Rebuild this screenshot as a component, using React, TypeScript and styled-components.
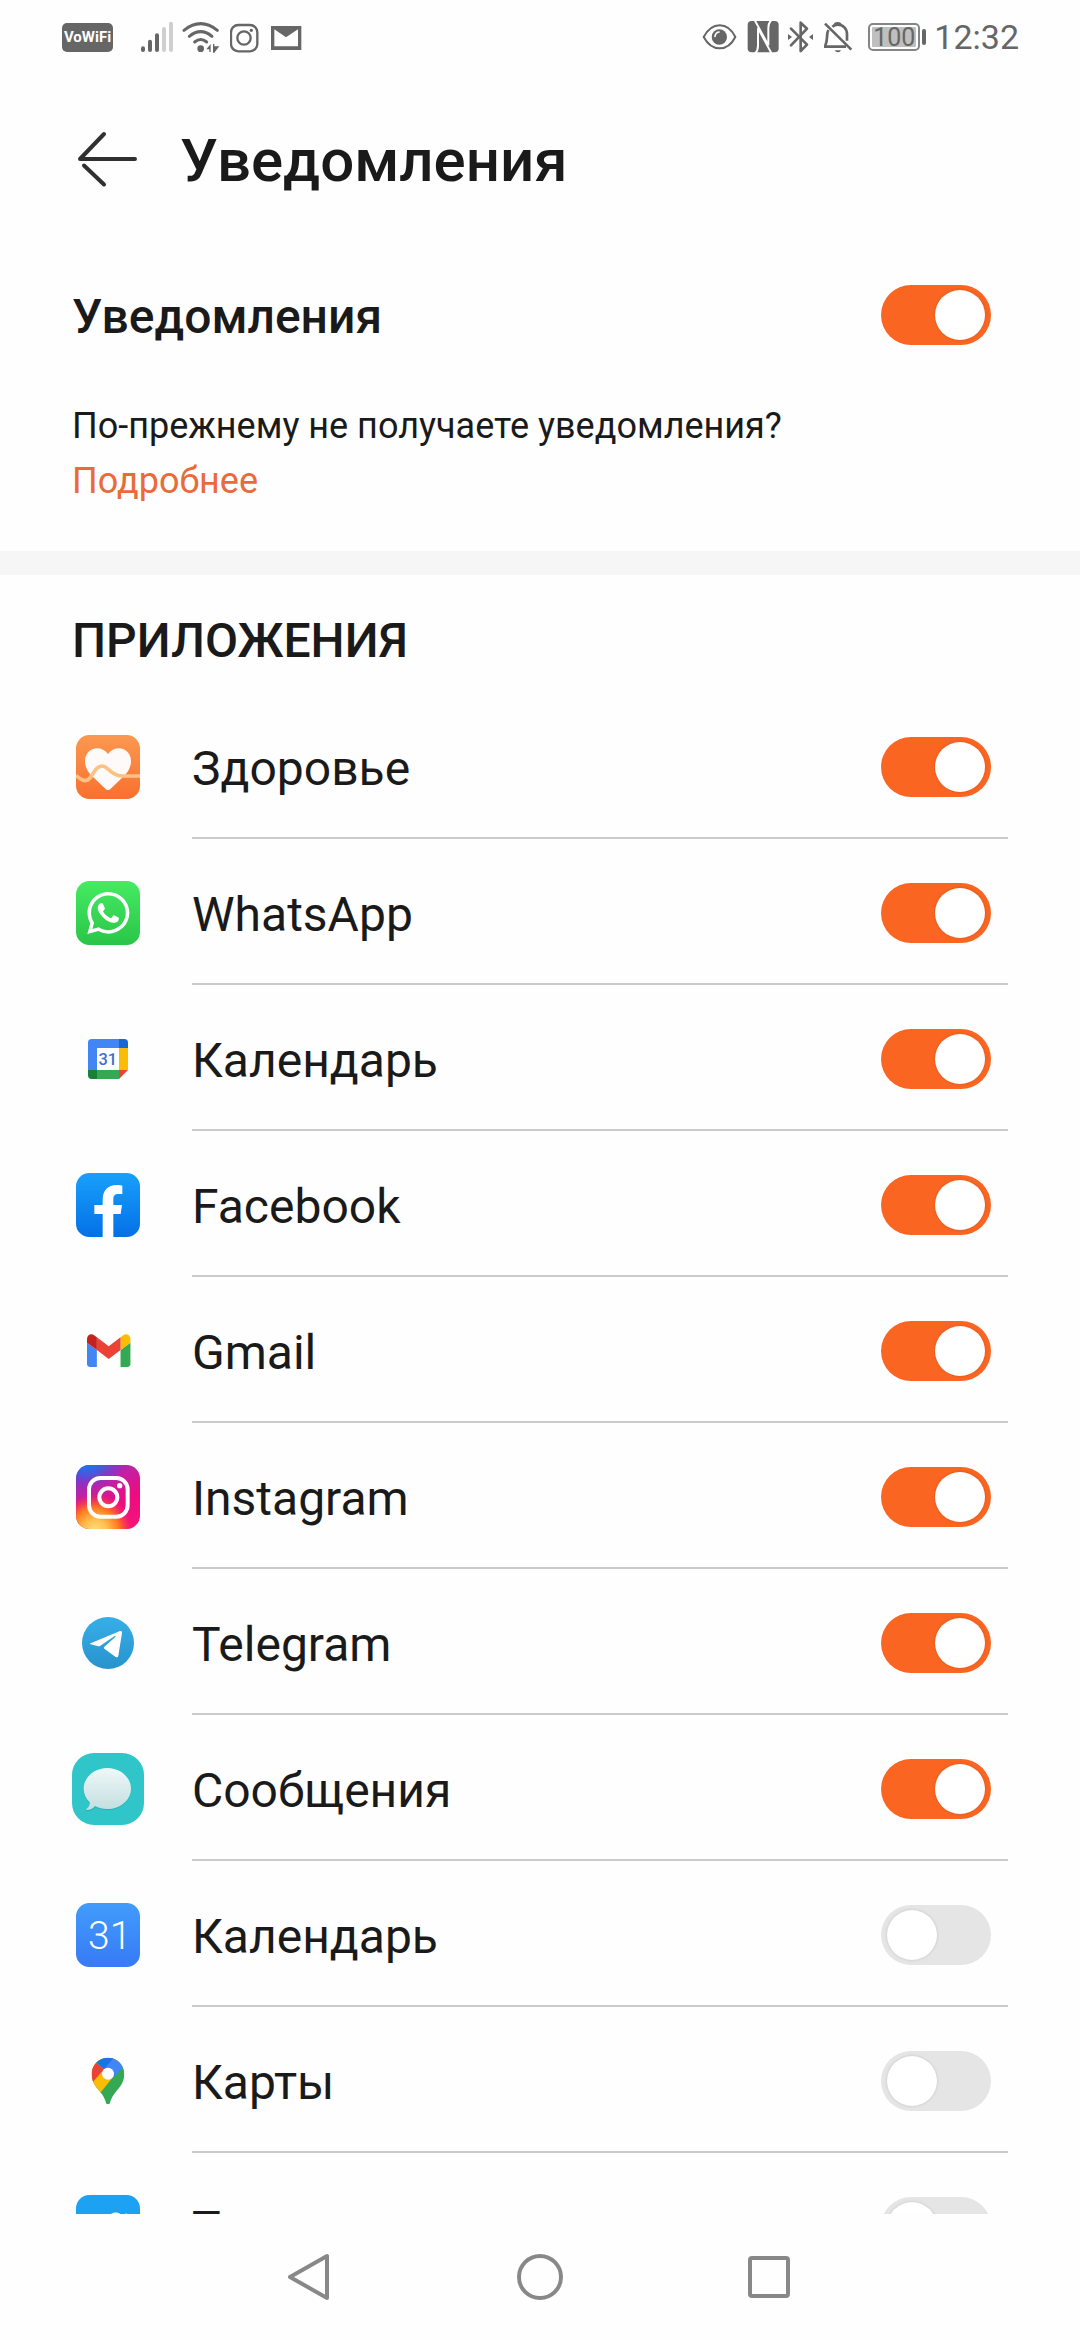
import React, { useState } from "react";
import styled, { createGlobalStyle } from "styled-components";
import { FaTwitter, FaWhatsapp } from "react-icons/fa";

const ink = "#1a1a1a";
const statusInk = "#666666";
const accent = "#fb6522";

const GlobalStyle = createGlobalStyle`
  *, *::before, *::after { box-sizing: border-box; }
  body { margin: 0; background: #fefefe; }
`;

const Screen = styled.div`
  display: flex;
  flex-direction: column;
  height: 100vh;
  overflow: hidden;
  background: #fefefe;
  color: ${ink};
  font-family: Roboto, "Noto Sans", sans-serif;
`;

/* ---------- status bar ---------- */

const StatusBar = styled.div`
  flex: none;
  display: flex;
  align-items: center;
  justify-content: space-between;
  height: 74px;
  padding: 0 61px 0 62px;
  color: ${statusInk};
`;

const StatusGroup = styled.div`
  display: flex;
  align-items: center;
  gap: 8px;
`;

const CallBadge = styled.span`
  width: 51px;
  height: 29px;
  margin-right: 20px;
  border-radius: 5px;
  background: ${statusInk};
  color: #fff;
  font-size: 15px;
  font-weight: 700;
  line-height: 29px;
  text-align: center;
`;

const StatusSvg = styled.svg`
  flex: none;
  display: block;
  height: 34px;
`;

const Battery = styled.span`
  display: flex;
  align-items: center;
  gap: 2px;
`;

const BatteryCell = styled.span`
  width: 52px;
  height: 28px;
  padding: 2px;
  border: 2px solid #858585;
  border-radius: 5px;
  background: #bfbfbf content-box;
  font-size: 25px;
  line-height: 22px;
  display: flex;
  justify-content: center;
`;

const BatteryTip = styled.span`
  width: 4px;
  height: 16px;
  border-radius: 2px;
  background: ${statusInk};
`;

const Clock = styled.time`
  font-size: 34px;
  line-height: 40px;
`;

/* ---------- page ---------- */

const TitleBar = styled.header`
  flex: none;
  display: flex;
  align-items: center;
  gap: 40px;
  height: 174px;
  padding: 0 72px;
`;

const BackButton = styled.button`
  display: block;
  width: 68px;
  height: 68px;
  padding: 0;
  border: 0;
  background: none;
`;

const Title = styled.h1`
  margin: 0;
  font-size: 60px;
  font-weight: 500;
  line-height: 72px;
`;

const Content = styled.main`
  flex: 1;
  min-height: 0;
  overflow: auto;
  scrollbar-width: none;
`;

const MasterRow = styled.div`
  display: flex;
  align-items: center;
  justify-content: space-between;
  height: 134px;
  padding: 0 89px 0 72px;
`;

const MasterLabel = styled.label`
  padding-top: 3px;
  font-size: 48px;
  font-weight: 500;
  line-height: 56px;
`;

const Help = styled.p`
  margin: 0;
  padding: 17px 72px 42px;
  border-bottom: 24px solid #f6f6f6;
  font-size: 36px;
  line-height: 55px;
`;

const HelpLink = styled.a`
  display: block;
  color: #e96b39;
  text-decoration: none;
`;

const SectionTitle = styled.h2`
  margin: 0;
  padding: 38px 72px 24px;
  font-size: 48px;
  font-weight: 500;
  line-height: 56px;
`;

const AppList = styled.ul`
  margin: 0;
  padding: 0;
  list-style: none;
`;

const AppItem = styled.li`
  display: flex;
  align-items: center;
  gap: 48px;
  height: 146px;
  padding: 2px 72px 0;
`;

const AppIcon = styled.svg`
  flex: none;
  display: block;
  width: 72px;
  height: 72px;
`;

const AppBody = styled.div`
  flex: 1;
  align-self: stretch;
  display: flex;
  align-items: center;
  justify-content: space-between;
  padding: 2px 17px 0 0;
  border-bottom: 2px solid #cbcbcb;
`;

const AppName = styled.label`
  padding-top: 3px;
  font-size: 48px;
  line-height: 56px;
`;

const Switch = styled.input`
  appearance: none;
  flex: none;
  width: 110px;
  height: 60px;
  margin: 0;
  padding: 5px 6px;
  border-radius: 30px;
  background: #e5e5e5;
  display: flex;

  &::before {
    content: "";
    width: 50px;
    height: 50px;
    border-radius: 50%;
    background: #fff;
    box-shadow: 0 0 3px rgba(0, 0, 0, 0.16);
  }

  &:checked {
    justify-content: flex-end;
    background: ${accent};
  }
`;

const NavBar = styled.nav`
  flex: none;
  display: flex;
  justify-content: center;
  height: 126px;
`;

const NavButton = styled.button`
  width: 230px;
  padding: 0;
  border: 0;
  background: none;
  display: flex;
  align-items: center;
  justify-content: center;
`;

/* ---------- app icons ---------- */

const HealthIcon = () => (
  <AppIcon viewBox="36 33 216 216" aria-hidden="true">
    <defs>
      <linearGradient id="health-bg" x1="0" y1="0" x2="0" y2="1">
        <stop offset="0" stopColor="#fc9850" />
        <stop offset="1" stopColor="#f8702e" />
      </linearGradient>
    </defs>
    <rect x="48" y="45" width="192" height="192" rx="40" fill="url(#health-bg)" />
    <path
      d="M144 102c-8-11-20-17-33-17-20 0-36 17-36 38 0 22 13 38 25 49l36 34c5 5 11 5 16 0l36-34c12-11 25-27 25-49 0-21-16-38-36-38-13 0-25 6-33 17z"
      fill="#fffafa"
    />
    <path
      d="M48 168c10 3 14 14 28 14 22 0 24-44 50-44 19 0 26 30 60 30h54"
      fill="none"
      stroke="#fcc283"
      strokeWidth="11"
    />
  </AppIcon>
);

const WhatsAppIcon = () => (
  <AppIcon viewBox="36 471 216 216" aria-hidden="true">
    <defs>
      <linearGradient id="whatsapp-bg" x1="0" y1="0" x2="0" y2="1">
        <stop offset="0" stopColor="#45eb62" />
        <stop offset="1" stopColor="#2ac548" />
      </linearGradient>
    </defs>
    <rect x="48" y="483" width="192" height="192" rx="40" fill="url(#whatsapp-bg)" />
    <FaWhatsapp x="73" y="507" size="144" color="#fff" />
  </AppIcon>
);

const GoogleCalendarIcon = () => (
  <AppIcon viewBox="36 39 216 216" aria-hidden="true">
    <path d="M84 180V98q0-11 11-11h82v27h-66v66z" fill="#4285f4" />
    <path d="M177 87h16q11 0 11 11v16h-27z" fill="#1967d2" />
    <path d="M177 114h27v66h-27z" fill="#fbbc04" />
    <path d="M111 180h66v27h-66z" fill="#34a853" />
    <path d="M84 180h27v27H95q-11 0-11-11z" fill="#188038" />
    <path d="M177 180h27l-27 27z" fill="#ea4335" />
    <path d="M111 114h66v66h-66z" fill="#fff" />
    <text x="143" y="165" fontSize="49" fontWeight="500" textAnchor="middle" fill="#3c6fd0">31</text>
  </AppIcon>
);

const FacebookIcon = () => (
  <AppIcon viewBox="36 477 216 216" aria-hidden="true">
    <defs>
      <linearGradient id="facebook-bg" x1="0" y1="0" x2="0" y2="1">
        <stop offset="0" stopColor="#18a0fb" />
        <stop offset="1" stopColor="#0470e6" />
      </linearGradient>
    </defs>
    <rect x="48" y="489" width="192" height="192" rx="40" fill="url(#facebook-bg)" />
    <path
      d="M128 682v-70h-25v-27h25v-14c0-31 16-46 42-46 8 0 14 1 17 2v25h-12c-11 0-15 6-15 15v18h26l-4 27h-22v70z"
      fill="#fff"
    />
  </AppIcon>
);

const GmailIcon = () => (
  <AppIcon viewBox="36 45 216 216" aria-hidden="true">
    <g transform="translate(81 103) scale(1.48) translate(-52 -42)">
      <path fill="#4285f4" d="M58 108h14V74L52 59v43c0 3.32 2.69 6 6 6" />
      <path fill="#34a853" d="M120 108h14c3.32 0 6-2.69 6-6V59l-20 15" />
      <path fill="#fbbc04" d="M120 48v26l20-15v-8c0-7.42-8.47-11.65-14.4-7.2" />
      <path fill="#ea4335" d="M72 74V48l24 18 24-18v26L96 92" />
      <path fill="#c5221f" d="M52 51v8l20 15V48l-5.6-4.2c-5.94-4.45-14.4-.22-14.4 7.2" />
    </g>
  </AppIcon>
);

const InstagramIcon = () => (
  <AppIcon viewBox="36 483 216 216" aria-hidden="true">
    <defs>
      <linearGradient id="ig-base" x1="0.1" y1="0" x2="0.7" y2="1">
        <stop offset="0" stopColor="#7a35cf" />
        <stop offset="0.4" stopColor="#c3219f" />
        <stop offset="0.7" stopColor="#ee0a82" />
        <stop offset="1" stopColor="#f4127c" />
      </linearGradient>
      <radialGradient id="ig-blue" cx="0.16" cy="0" r="0.62" gradientTransform="matrix(1 0 0 .6 0 0)">
        <stop offset="0" stopColor="#1b78e8" />
        <stop offset="0.4" stopColor="#3a5fe0" stopOpacity="0.85" />
        <stop offset="1" stopColor="#7a35cf" stopOpacity="0" />
      </radialGradient>
      <radialGradient id="ig-warm" cx="0.3" cy="1.04" r="0.62">
        <stop offset="0" stopColor="#ffe08a" />
        <stop offset="0.3" stopColor="#ffc14e" />
        <stop offset="0.6" stopColor="#ff7a1e" />
        <stop offset="0.8" stopColor="#fb3a4c" stopOpacity="0.7" />
        <stop offset="1" stopColor="#ee0a82" stopOpacity="0" />
      </radialGradient>
    </defs>
    <rect x="48" y="495" width="192" height="192" rx="40" fill="url(#ig-base)" />
    <rect x="48" y="495" width="192" height="192" rx="40" fill="url(#ig-blue)" />
    <rect x="48" y="495" width="192" height="192" rx="40" fill="url(#ig-warm)" />
    <rect x="87" y="534" width="116" height="116" rx="34" fill="none" stroke="#fff" strokeWidth="12" />
    <circle cx="145" cy="592" r="27" fill="none" stroke="#fff" strokeWidth="12" />
    <circle cx="179" cy="557" r="8" fill="#fff" />
  </AppIcon>
);

const TelegramIcon = () => (
  <AppIcon viewBox="36 51 216 216" aria-hidden="true">
    <defs>
      <linearGradient id="telegram-bg" x1="0" y1="0" x2="0" y2="1">
        <stop offset="0" stopColor="#37aee9" />
        <stop offset="1" stopColor="#2893cd" />
      </linearGradient>
    </defs>
    <circle cx="144" cy="159" r="78" fill="url(#telegram-bg)" />
    <path
      d="M92 160l88-37c4-1 7 1 6 6l-11 68c-1 5-4 6-8 4l-33-24c-3-2-3-5-1-7l33-29c2-2 0-4-3-2l-42 28c-3 2-6 2-9 1l-20-5c-3-1-3-2 0-3z"
      fill="#fff"
    />
  </AppIcon>
);

const MessagesIcon = () => (
  <AppIcon viewBox="36 489 216 216" aria-hidden="true">
    <defs>
      <linearGradient id="bubble" x1="0" y1="0" x2="0" y2="1">
        <stop offset="0" stopColor="#eff8f9" />
        <stop offset="1" stopColor="#c3dedf" />
      </linearGradient>
    </defs>
    <rect x="36" y="489" width="216" height="216" rx="66" fill="#2fc5c9" />
    <path
      d="M142 538c39 0 71 27 71 61s-32 61-71 61c-14 0-26-2-36-8-6 8-15 12-25 12-3 0-3-3-1-4 6-4 10-10 9-20-12-11-18-25-18-41 0-34 32-61 71-61z"
      fill="#179fa4"
      opacity="0.45"
    />
    <path
      d="M142 534c39 0 71 28 71 62s-32 61-71 61c-14 0-27-3-37-9-6 8-14 12-24 12-3 0-3-3-1-4 6-4 10-10 9-19-11-11-18-25-18-41 0-34 32-62 71-62z"
      fill="url(#bubble)"
    />
  </AppIcon>
);

const CalendarIcon = () => (
  <AppIcon viewBox="36 57 216 216" aria-hidden="true">
    <defs>
      <linearGradient id="calendar-bg" x1="0" y1="0" x2="0" y2="1">
        <stop offset="0" stopColor="#419cfc" />
        <stop offset="1" stopColor="#377af5" />
      </linearGradient>
    </defs>
    <rect x="48" y="69" width="192" height="192" rx="40" fill="url(#calendar-bg)" />
    <text x="149" y="206" fontSize="117" fontWeight="300" textAnchor="middle" fill="#fff">31</text>
  </AppIcon>
);

const MapsIcon = () => (
  <AppIcon viewBox="36 495 216 216" aria-hidden="true">
    <defs>
      <clipPath id="pin">
        <path d="M144 533c27 0 49 22 49 49 0 30-19 43-31 61-8 12-9 17-12 25-2 6-10 6-12 0-3-8-4-13-12-25-12-18-31-31-31-61 0-27 22-49 49-49z" />
      </clipPath>
    </defs>
    <g clipPath="url(#pin)">
      <path d="M90 530h110v145H90z" fill="#34a853" />
      <path d="M90 530h118l-85 106-33 10z" fill="#fbbc04" />
      <path d="M208 540l-44 50-32-25 34-40z" fill="#4285f4" />
      <path d="M100 541l32 27-38 43-10-20z" fill="#ea4335" />
      <path d="M105 545l27 23 36-43h-50z" fill="#1a73e8" />
    </g>
    <circle cx="144" cy="581" r="18" fill="#fff" />
  </AppIcon>
);

const TwitterIcon = () => (
  <AppIcon viewBox="36 933 216 216" aria-hidden="true">
    <rect x="48" y="945" width="192" height="192" rx="40" fill="#1da1f2" />
    <FaTwitter x="84" y="986" size="120" color="#fff" />
  </AppIcon>
);

type AppEntry = { id: string; name: string; icon: React.FC; on: boolean };

const apps: AppEntry[] = [
  { id: "health", name: "Здоровье", icon: HealthIcon, on: true },
  { id: "whatsapp", name: "WhatsApp", icon: WhatsAppIcon, on: true },
  { id: "gcalendar", name: "Календарь", icon: GoogleCalendarIcon, on: true },
  { id: "facebook", name: "Facebook", icon: FacebookIcon, on: true },
  { id: "gmail", name: "Gmail", icon: GmailIcon, on: true },
  { id: "instagram", name: "Instagram", icon: InstagramIcon, on: true },
  { id: "telegram", name: "Telegram", icon: TelegramIcon, on: true },
  { id: "messages", name: "Сообщения", icon: MessagesIcon, on: true },
  { id: "calendar", name: "Календарь", icon: CalendarIcon, on: false },
  { id: "maps", name: "Карты", icon: MapsIcon, on: false },
  { id: "twitter", name: "Твиттер", icon: TwitterIcon, on: false },
];

const StatusIcons = () => (
  <StatusBar>
    <StatusGroup>
      <CallBadge>VoWiFi</CallBadge>
      <StatusSvg viewBox="303 60 99 102" width="33" aria-hidden="true">
        <g strokeWidth="12" strokeLinecap="round" stroke={statusInk}>
          <path d="M309 145v5M330 125v25M351 106v44" />
          <path d="M372 87v63M393 71v79" stroke="#cfcfcf" />
        </g>
      </StatusSvg>
      <StatusSvg viewBox="426 60 120 102" width="40" aria-hidden="true">
        <g fill="none" stroke={statusInk} strokeWidth="9" strokeLinecap="round">
          <path d="M432 91q50-40 100 0" />
          <path d="M448 109q34-28 68 0" />
          <path d="M464 126q18-15 36 0" />
        </g>
        <circle cx="482" cy="146" r="10" fill={statusInk} />
        <path d="M499 148l13-16v24h-4v-8zM519 132h4v7h15l-15 19h-4z" fill={statusInk} />
      </StatusSvg>
      <StatusSvg viewBox="570 60 96 102" width="32" aria-hidden="true">
        <rect x="573" y="75" width="79" height="79" rx="22" fill="none" stroke={statusInk} strokeWidth="7" />
        <circle cx="612" cy="114" r="20" fill="none" stroke={statusInk} strokeWidth="7" />
        <circle cx="634" cy="91" r="5" fill={statusInk} />
      </StatusSvg>
      <StatusSvg viewBox="690 60 96 102" width="32" aria-hidden="true">
        <path d="M693 78h91v72h-91zM703 88v51h71V88l-36 24z" fill={statusInk} fillRule="evenodd" />
      </StatusSvg>
    </StatusGroup>
    <StatusGroup>
      <StatusSvg viewBox="63 60 108 102" width="36" aria-hidden="true">
        <path
          d="M68 111c12-22 28-35 48-35s36 13 47 35c-11 22-27 34-47 34s-36-12-48-34z"
          fill="none"
          stroke={statusInk}
          strokeWidth="6"
        />
        <circle cx="115" cy="111" r="23" fill={statusInk} />
        <path d="M102 109q1-11 12-13" fill="none" stroke="#fff" strokeWidth="5" strokeLinecap="round" />
      </StatusSvg>
      <StatusSvg viewBox="195 60 102 102" width="34" aria-hidden="true">
        <rect x="200" y="63" width="93" height="94" rx="12" fill={statusInk} />
        <g fill="none" stroke="#fefefe" strokeWidth="6">
          <path d="M221 60l41 76V84q0-15 9-24" />
          <path d="M272 161l-41-76v52q0 15-9 24" />
        </g>
      </StatusSvg>
      <StatusSvg viewBox="321 60 84 102" width="28" aria-hidden="true">
        <path
          d="M330 86l48 48-19 19V68l19 18-48 50"
          fill="none"
          stroke={statusInk}
          strokeWidth="8"
          strokeLinecap="round"
          strokeLinejoin="round"
        />
        <path d="M321 102l12 9-12 9zM396 102v18l-12-9z" fill={statusInk} />
      </StatusSvg>
      <StatusSvg viewBox="429 60 108 102" width="36" aria-hidden="true">
        <g fill="none" stroke={statusInk} strokeWidth="8">
          <path d="M432 71l79 78" />
          <path d="M442 90c-4 8-4 14-4 22 0 12-2 18-6 28h63" />
          <path d="M454 80c6-5 10-6 16-6 16 0 28 12 28 28v20" />
          <path d="M462 76c0-8 16-8 16 0" />
        </g>
        <path d="M461 151h19q-2 6-9 6t-10-6z" fill={statusInk} />
      </StatusSvg>
      <Battery>
        <BatteryCell>100</BatteryCell>
        <BatteryTip />
      </Battery>
      <Clock>12:32</Clock>
    </StatusGroup>
  </StatusBar>
);

export default function App() {
  const [allowed, setAllowed] = useState(true);
  const [enabled, setEnabled] = useState<Record<string, boolean>>(() =>
    Object.fromEntries(apps.map((app) => [app.id, app.on]))
  );

  return (
    <Screen>
      <GlobalStyle />
      <StatusIcons />
      <TitleBar>
        <BackButton type="button" aria-label="Назад">
          <svg width="68" height="68" viewBox="72 127 68 68" fill="none" stroke="#303030" strokeWidth="4" strokeLinecap="round" strokeLinejoin="round">
            <path d="M135 159H80l24-25M84 165.500l20 19" />
          </svg>
        </BackButton>
        <Title>Уведомления</Title>
      </TitleBar>
      <Content>
        <MasterRow>
          <MasterLabel htmlFor="all">Уведомления</MasterLabel>
          <Switch id="all" type="checkbox" role="switch" checked={allowed} onChange={() => setAllowed(!allowed)} />
        </MasterRow>
        <Help>
          По-прежнему не получаете уведомления?
          <HelpLink href="#help">Подробнее</HelpLink>
        </Help>
        <SectionTitle>ПРИЛОЖЕНИЯ</SectionTitle>
        <AppList>
          {apps.map(({ id, name, icon: Icon, }) => (
            <AppItem key={id}>
              <Icon />
              <AppBody>
                <AppName htmlFor={id}>{name}</AppName>
                <Switch
                  id={id}
                  type="checkbox"
                  role="switch"
                  checked={enabled[id]}
                  onChange={() => setEnabled({ ...enabled, [id]: !enabled[id] })}
                />
              </AppBody>
            </AppItem>
          ))}
        </AppList>
      </Content>
      <NavBar>
        <NavButton type="button" aria-label="Назад">
          <svg width="48" height="48" viewBox="0 0 48 48" fill="none" stroke="#888" strokeWidth="4" strokeLinejoin="round">
            <path d="M41 3v42L4 24z" />
          </svg>
        </NavButton>
        <NavButton type="button" aria-label="Домой">
          <svg width="48" height="48" viewBox="0 0 48 48" fill="none" stroke="#888" strokeWidth="4">
            <circle cx="24" cy="24" r="21" />
          </svg>
        </NavButton>
        <NavButton type="button" aria-label="Недавние">
          <svg width="48" height="48" viewBox="0 0 48 48" fill="none" stroke="#888" strokeWidth="4">
            <rect x="4" y="5" width="38" height="38" rx="2" />
          </svg>
        </NavButton>
      </NavBar>
    </Screen>
  );
}
